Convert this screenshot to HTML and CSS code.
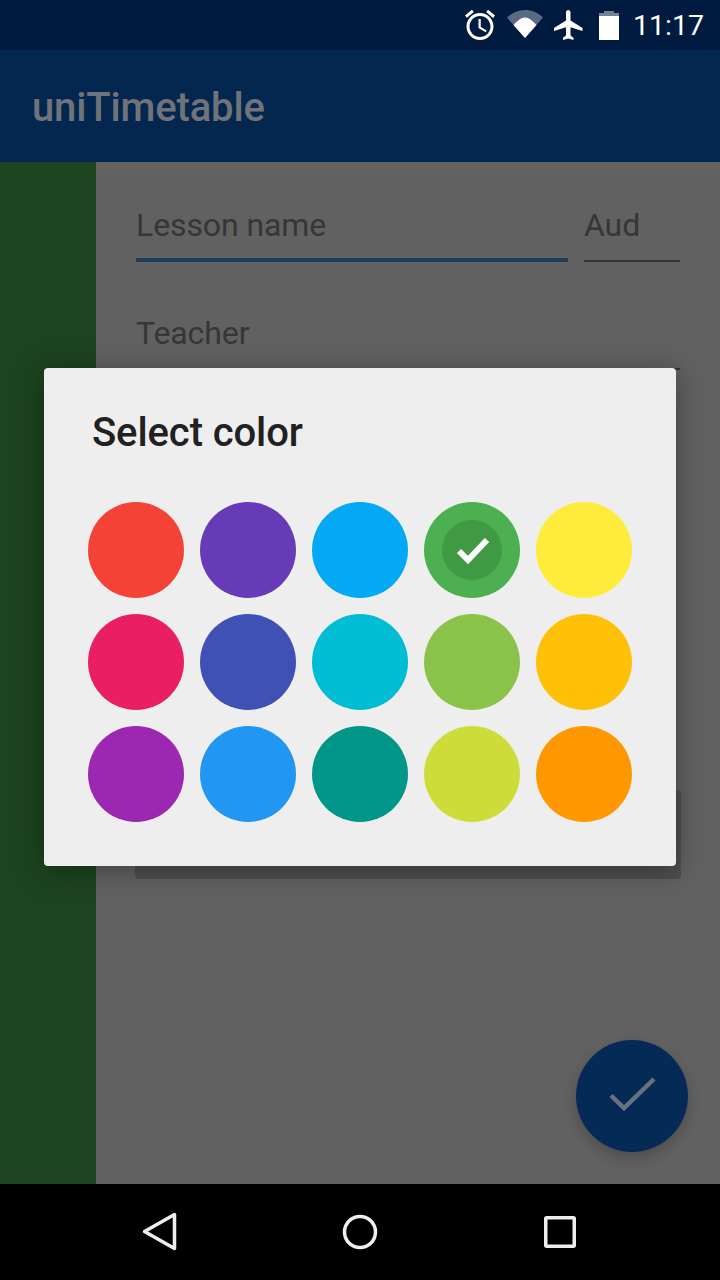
FILE: index.html
```html
<!DOCTYPE html>
<html lang="en">
<head>
    <meta charset="UTF-8">
    <title>uniTimetable</title>
    <link rel="stylesheet" href="styles.css">
</head>
<body>
    <div class="screen">
        <div class="statusbar">
            <svg class="ic-alarm" width="36" height="36" viewBox="0 0 24 24"><path fill="#fff" d="M22 5.720l-4.600-3.860-1.290 1.530 4.600 3.860L22 5.720zM7.880 3.390L6.600 1.860 2 5.710l1.290 1.530 4.590-3.850zM12.500 8H11v6l4.750 2.850.75-1.230-4-2.370V8zM12 4c-4.970 0-9 4.030-9 9s4.030 9 9 9 9-4.030 9-9-4.030-9-9-9zm0 16c-3.870 0-7-3.130-7-7s3.130-7 7-7 7 3.130 7 7-3.130 7-7 7z"/></svg>
            <svg class="ic-wifi" width="36" height="28" viewBox="0 0 36 28"><path fill="#fff" fill-opacity=".35" d="M18 28L0 7.500C5 2.500 11 0 18 0s13 2.500 18 7.500z"/><path fill="#fff" d="M18 28L6.500 15C9.500 12 13.500 7.500 18 7.500s8.500 4.500 11.500 7.500z"/></svg>
            <svg class="ic-plane" width="36" height="36" viewBox="0 0 24 24"><path fill="#fff" d="M21 16v-2l-8-5V3.500C13 2.670 12.330 2 11.500 2S10 2.670 10 3.500V9l-8 5v2l8-2.500V19l-2 1.500V22l3.500-1 3.500 1v-1.500L13 19v-5.500l8 2.500z"/></svg>
            <svg class="ic-battery" width="20" height="29" viewBox="0 0 20 29"><path fill="#fff" fill-opacity=".45" d="M5 0h10v2h5v3H0V2h5z"/><path fill="#fff" d="M0 5h20v24H0z"/></svg>
            <span class="clock">11:17</span>
        </div>
        <div class="toolbar">uniTimetable</div>
        <div class="content">
            <div class="colorstrip"></div>
            <div class="form">
                <div class="row">
                    <div class="field field-active">Lesson name</div>
                    <div class="field field-aud">Aud</div>
                </div>
                <div class="field field-teacher">Teacher</div>
                <div class="card"></div>
            </div>
            <div class="fab">
                <svg width="48" height="48" viewBox="0 0 48 48"><path fill="none" stroke="#69727c" stroke-width="4.500" d="M3 23.500L16 36 46 7"/></svg>
            </div>
        </div>
        <div class="navbar">
            <div class="navbtn">
                <svg width="36" height="40" viewBox="0 0 36 40"><path fill="none" stroke="#eee" stroke-width="3.500" stroke-linejoin="round" d="M32.500 2.500v34L2.500 19.500z"/></svg>
            </div>
            <div class="navbtn">
                <svg width="36" height="36" viewBox="0 0 36 36"><circle cx="18" cy="18" r="15.500" fill="none" stroke="#eee" stroke-width="3.500"/></svg>
            </div>
            <div class="navbtn">
                <svg width="32" height="32" viewBox="0 0 32 32"><rect x="1.750" y="1.750" width="28.500" height="28.500" rx="1" fill="none" stroke="#eee" stroke-width="3.500"/></svg>
            </div>
        </div>

        <div class="dialog">
            <h2 class="dialog-title">Select color</h2>
            <div class="colors">
                <div class="color c-red"></div>
                <div class="color c-deeppurple"></div>
                <div class="color c-lightblue"></div>
                <div class="color c-green">
                    <div class="selected">
                        <svg width="36" height="36" viewBox="0 0 36 36"><path fill="none" stroke="#fff" stroke-width="6" d="M5 19L14 28 33 8"/></svg>
                    </div>
                </div>
                <div class="color c-yellow"></div>
                <div class="color c-pink"></div>
                <div class="color c-indigo"></div>
                <div class="color c-cyan"></div>
                <div class="color c-lightgreen"></div>
                <div class="color c-amber"></div>
                <div class="color c-purple"></div>
                <div class="color c-blue"></div>
                <div class="color c-teal"></div>
                <div class="color c-lime"></div>
                <div class="color c-orange"></div>
            </div>
        </div>
    </div>
</body>
</html>
```

FILE: styles.css
```css
*{
    padding: 0;
    margin: 0;
    box-sizing: border-box;
}
body{
    width: 720px;
    height: 1280px;
    overflow: hidden;
    font-family: Roboto, "Liberation Sans", sans-serif;
}
.screen{
    position: relative;
    display: flex;
    flex-direction: column;
    width: 720px;
    height: 1280px;
    background-color: #616161;
}

.statusbar{
    display: flex;
    align-items: center;
    justify-content: flex-end;
    height: 50px;
    padding-right: 16px;
    background-color: #011b40;
    color: #fff;
}
.ic-alarm{
    margin-right: 9px;
}
.ic-wifi{
    margin-right: 8px;
    margin-bottom: 2px;
}
.ic-plane{
    margin-right: 12px;
}
.ic-battery{
    margin-right: 14px;
}
.clock{
    font-size: 28.5px;
}

.toolbar{
    height: 112px;
    padding-left: 32px;
    line-height: 116px;
    font-size: 40px;
    font-weight: 500;
    letter-spacing: -0.15px;
    color: #70747a;
    background-color: #03274f;
}

.content{
    position: relative;
    display: flex;
    flex: 1;
    min-height: 0;
}
.colorstrip{
    flex: none;
    width: 96px;
    background-color: #1d441e;
}
.form{
    flex: 1;
    min-width: 0;
    padding: 40px 40px 0;
    background: linear-gradient(#6a6360, #616161 12px);
}
.row{
    display: flex;
    gap: 16px;
}
.field{
    height: 60px;
    font-size: 32px;
    line-height: 46px;
    letter-spacing: -0.1px;
    color: #363636;
    border-bottom: 2px solid #333;
}
.field-active{
    width: 432px;
    border-bottom: 4px solid #1d3f5e;
}
.field-aud{
    width: 96px;
}
.field-teacher{
    width: 544px;
    height: 108px;
    padding-top: 48px;
}
.card{
    width: 546px;
    height: 89px;
    margin-top: 420px;
    margin-left: -1px;
    border-radius: 4px;
    background-color: #4f4f4f;
}

.fab{
    position: absolute;
    right: 32px;
    bottom: 32px;
    display: flex;
    align-items: center;
    justify-content: center;
    width: 112px;
    height: 112px;
    border-radius: 50%;
    background-color: #032b55;
    box-shadow: 0 6px 14px rgba(0, 0, 0, .2);
}

.navbar{
    display: flex;
    align-items: center;
    justify-content: center;
    gap: 160px;
    height: 96px;
    background-color: #000;
}
.navbtn{
    display: flex;
    align-items: center;
    justify-content: center;
    width: 40px;
    height: 40px;
}

.dialog{
    position: absolute;
    left: 44px;
    top: 368px;
    width: 632px;
    height: 498px;
    padding: 45px 44px 0;
    border-radius: 4px;
    background-color: #eee;
    box-shadow: 0 4px 28px rgba(0, 0, 0, .35);
}
.dialog-title{
    padding-left: 4px;
    font-size: 40px;
    line-height: 40px;
    font-weight: 500;
    letter-spacing: -0.1px;
    color: #212121;
}
.colors{
    display: grid;
    grid-template-columns: repeat(5, 96px);
    gap: 16px;
    margin-top: 49px;
}
.color{
    display: flex;
    align-items: center;
    justify-content: center;
    width: 96px;
    height: 96px;
    border-radius: 50%;
}
.selected{
    display: flex;
    align-items: center;
    justify-content: center;
    width: 60px;
    height: 60px;
    border-radius: 50%;
    background-color: #409a44;
}
.c-red{ background-color: #f44336; }
.c-deeppurple{ background-color: #673ab7; }
.c-lightblue{ background-color: #03a9f4; }
.c-green{ background-color: #4caf50; }
.c-yellow{ background-color: #ffeb3b; }
.c-pink{ background-color: #e91e63; }
.c-indigo{ background-color: #3f51b5; }
.c-cyan{ background-color: #00bcd4; }
.c-lightgreen{ background-color: #8bc34a; }
.c-amber{ background-color: #ffc107; }
.c-purple{ background-color: #9c27b0; }
.c-blue{ background-color: #2196f3; }
.c-teal{ background-color: #009688; }
.c-lime{ background-color: #cddc39; }
.c-orange{ background-color: #ff9800; }
```
